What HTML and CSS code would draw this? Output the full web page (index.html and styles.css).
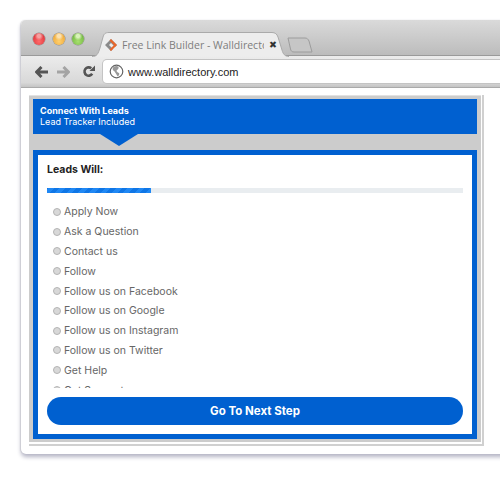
FILE: index.html
```html
<!DOCTYPE html>
<html lang="en">
<head>
  <meta charset="UTF-8">
  <title>Free Link Builder - Walldirectory</title>
  <link rel="stylesheet" href="styles.css">
</head>
<body>
  <div class="window">
    <div class="tabstrip">
      <div class="lights">
        <span class="light light-red"></span>
        <span class="light light-yellow"></span>
        <span class="light light-green"></span>
      </div>
      <div class="tab">
        <svg class="tab-shape" width="198" height="25" viewBox="0 0 198 25">
          <path d="M0 24.500C5 24.500 6 22 8 16L11 5C12 2 13 .5 17 .5H180C183 .5 185 2 186 5L190 18C191 22 193 24.500 197 24.500" fill="#ededed" stroke="#aaa"/>
        </svg>
        <svg class="favicon" width="14" height="14" viewBox="0 0 14 14">
          <path d="M7 1 1 7l6 6 2-2-4-4 2-2 4 4 2-2z" fill="#8a8a8a"/>
          <path d="M7 1l6 6-6 6-1.500-1.500L10 7 5.500 2.500z" fill="#e8662a"/>
        </svg>
        <span class="tab-title">Free Link Builder - Walldirectory</span>
        <span class="tab-close">&#10006;</span>
      </div>
      <svg class="newtab" width="26" height="16" viewBox="0 0 26 16">
        <path d="M1 1H18C20 1 21 2 22 4L25 15H7C5 15 4 14 3.500 12z" fill="#c6c6c6" stroke="#9c9c9c"/>
      </svg>
    </div>
    <div class="toolbar">
      <svg class="nav-icon nav-back" width="13" height="12" viewBox="0 0 13 12">
        <path d="M6.500 1 1.500 6l5 5M2 6H13" fill="none" stroke="#555" stroke-width="3"/>
      </svg>
      <svg class="nav-icon nav-forward" width="13" height="12" viewBox="0 0 13 12">
        <path d="M6.500 1l5 5-5 5M11 6H0" fill="none" stroke="#a4a4a4" stroke-width="3"/>
      </svg>
      <svg class="nav-icon nav-reload" width="13" height="13" viewBox="0 0 14 14">
        <path d="M11 9.500A4.500 4.500 0 1 1 10 3.500" fill="none" stroke="#555" stroke-width="2.800"/>
        <path d="M8 6.500h6V.5z" fill="#555"/>
      </svg>
      <div class="address">
        <svg class="globe" width="15" height="15" viewBox="0 0 16 16">
          <circle cx="8" cy="8" r="6.700" fill="#fff" stroke="#666" stroke-width="1.300"/>
          <path d="M5 3c2-1 4-1 5 0 1 2-1 3-2 4 0 2 2 2 3 3 0 2-1 3-2 3-1-2-2-3-3-5C4 7 3 5 5 3z" fill="#999"/>
        </svg>
        <span class="url">www.walldirectory.com</span>
      </div>
    </div>
    <div class="toolbar-edge"></div>
    <div class="page">
      <div class="frame">
        <div class="panel">
          <div class="banner">
            <div class="banner-title">Connect With Leads</div>
            <div class="banner-sub">Lead Tracker Included</div>
          </div>
          <div class="card">
            <div class="card-title">Leads Will:</div>
            <div class="progress"><div class="progress-fill"></div></div>
            <ul class="options">
              <li><span class="radio"></span>Apply Now</li>
              <li><span class="radio"></span>Ask a Question</li>
              <li><span class="radio"></span>Contact us</li>
              <li><span class="radio"></span>Follow</li>
              <li><span class="radio"></span>Follow us on Facebook</li>
              <li><span class="radio"></span>Follow us on Google</li>
              <li><span class="radio"></span>Follow us on Instagram</li>
              <li><span class="radio"></span>Follow us on Twitter</li>
              <li><span class="radio"></span>Get Help</li>
              <li><span class="radio"></span>Get Support</li>
            </ul>
            <button class="next-btn">Go To Next Step</button>
          </div>
        </div>
      </div>
    </div>
  </div>
</body>
</html>
```

FILE: styles.css
```css
html, body {
  margin: 0;
  height: 483px;
  overflow: hidden;
  background: #fff;
}
body {
  padding: 20px 0 0 21px;
  box-sizing: border-box;
  font-family: Inter, "Open Sans", sans-serif;
}
.window {
  width: 500px;
  height: 434px;
  border-radius: 5px 0 0 5px;
  background: #fff;
  box-shadow: 0 3px 4px #b4b4c4, -1px 0 1px #e0e0e0;
  overflow: hidden;
}
.tabstrip {
  position: relative;
  display: flex;
  align-items: center;
  height: 35px;
  background: linear-gradient(#dadada, #bcbcbc);
  border-bottom: 1px solid #9a9a9a;
}
.lights {
  display: flex;
  gap: 7.500px;
  margin: 2px 0 0 12px;
}
.light {
  width: 12px;
  height: 12px;
  border-radius: 50%;
  box-shadow: 0 0 0 .5px #888;
}
.light-red {
  background: radial-gradient(circle at 50% 25%, #f6a0a0 0 15%, transparent 40%), radial-gradient(circle at 50% 70%, #ff6b6b, #d2232a);
}
.light-yellow {
  background: radial-gradient(circle at 50% 25%, #fbe2b0 0 15%, transparent 40%), radial-gradient(circle at 50% 70%, #ffd070, #e89a22);
}
.light-green {
  background: radial-gradient(circle at 50% 25%, #d8f2b8 0 15%, transparent 40%), radial-gradient(circle at 50% 70%, #a8e070, #5ea830);
}
.tab {
  position: absolute;
  left: 71px;
  top: 12px;
  width: 198px;
  height: 25px;
}
.tab-shape {
  position: absolute;
  left: 0;
  top: 0;
}
.favicon {
  position: absolute;
  left: 12px;
  top: 6px;
}
.tab-title {
  position: absolute;
  left: 30px;
  top: 5px;
  width: 142px;
  overflow: hidden;
  white-space: nowrap;
  font-family: "Open Sans", sans-serif;
  font-size: 10.500px;
  line-height: 16px;
  color: #7d7d7d;
}
.tab-close {
  position: absolute;
  left: 177px;
  top: 6px;
  font-family: "DejaVu Sans", sans-serif;
  font-size: 9.500px;
  line-height: 14px;
  color: #333;
}
.newtab {
  position: absolute;
  left: 266px;
  top: 17px;
}
.toolbar {
  display: flex;
  align-items: center;
  height: 23px;
  padding-top: 4px;
  background: linear-gradient(#ececec, #d8d8d8);
}
.nav-icon {
  flex-shrink: 0;
}
.nav-back {
  margin-left: 14px;
}
.nav-forward {
  margin-left: 9px;
}
.nav-reload {
  margin-left: 12px;
}
.address {
  display: flex;
  align-items: center;
  flex: 1;
  height: 23px;
  margin-left: 8px;
  padding-left: 6px;
  background: #fff;
  border-radius: 4px 0 0 4px;
  box-shadow: 0 0 0 1px #c4c4c4;
}
.url {
  margin-left: 4px;
  font-family: "Liberation Sans", sans-serif;
  font-size: 11px;
  color: #222;
}
.toolbar-edge {
  height: 4px;
  background: linear-gradient(#d6d6d6, #c4c4c4);
  border-bottom: 1px solid #aaa;
}
.page {
  padding: 7px 0 0 8px;
}
.frame {
  width: 455px;
  height: 351px;
  box-sizing: border-box;
  padding: 0 1px 2px 0;
  border-right: 2px solid #d0d0d0;
  border-bottom: 2px solid #d0d0d0;
}
.panel {
  position: relative;
  height: 347px;
  box-sizing: border-box;
  padding: 4px;
  background: #cccccc;
  border-top: 1px solid #e2e2e2;
}
.banner {
  height: 35px;
  box-sizing: border-box;
  padding: 6px 7px;
  margin-top: -1px;
  background: #0060d0;
  color: #fff;
  font-size: 9px;
  line-height: 11px;
}
.banner::after {
  content: "";
  position: absolute;
  left: 71px;
  top: 38px;
  border-style: solid;
  border-width: 12px 19.500px 0;
  border-color: #0060d0 transparent transparent;
}
.banner-title {
  font-weight: 700;
}
.card {
  display: flex;
  flex-direction: column;
  height: 289px;
  box-sizing: border-box;
  margin-top: 16px;
  padding: 9px;
  background: #fff;
  border: 5px solid #0060d0;
}
.card-title {
  font-size: 10.500px;
  font-weight: 700;
  line-height: 12px;
  color: #222;
}
.progress {
  height: 5px;
  margin-top: 12px;
  background: #e9edf0;
}
.progress-fill {
  width: 25%;
  height: 100%;
  background: repeating-linear-gradient(-45deg, #2088f4 0 4px, #0f76e6 4px 8px);
}
.options {
  flex: 1;
  min-height: 0;
  margin: 9px 0;
  padding: 0 0 0 6px;
  list-style: none;
  overflow: hidden;
}
.options li {
  display: flex;
  align-items: center;
  height: 19.800px;
  font-size: 10.500px;
  color: #666;
}
.radio {
  flex-shrink: 0;
  width: 6px;
  height: 6px;
  margin-right: 3px;
  border: 1px solid #b4b4b4;
  border-radius: 50%;
  background: #d8d8d8;
}
.next-btn {
  flex-shrink: 0;
  height: 28px;
  padding: 0;
  border: none;
  border-radius: 14px;
  background: #0060d0;
  color: #fff;
  font-family: inherit;
  font-size: 11.500px;
  font-weight: 700;
}
```
